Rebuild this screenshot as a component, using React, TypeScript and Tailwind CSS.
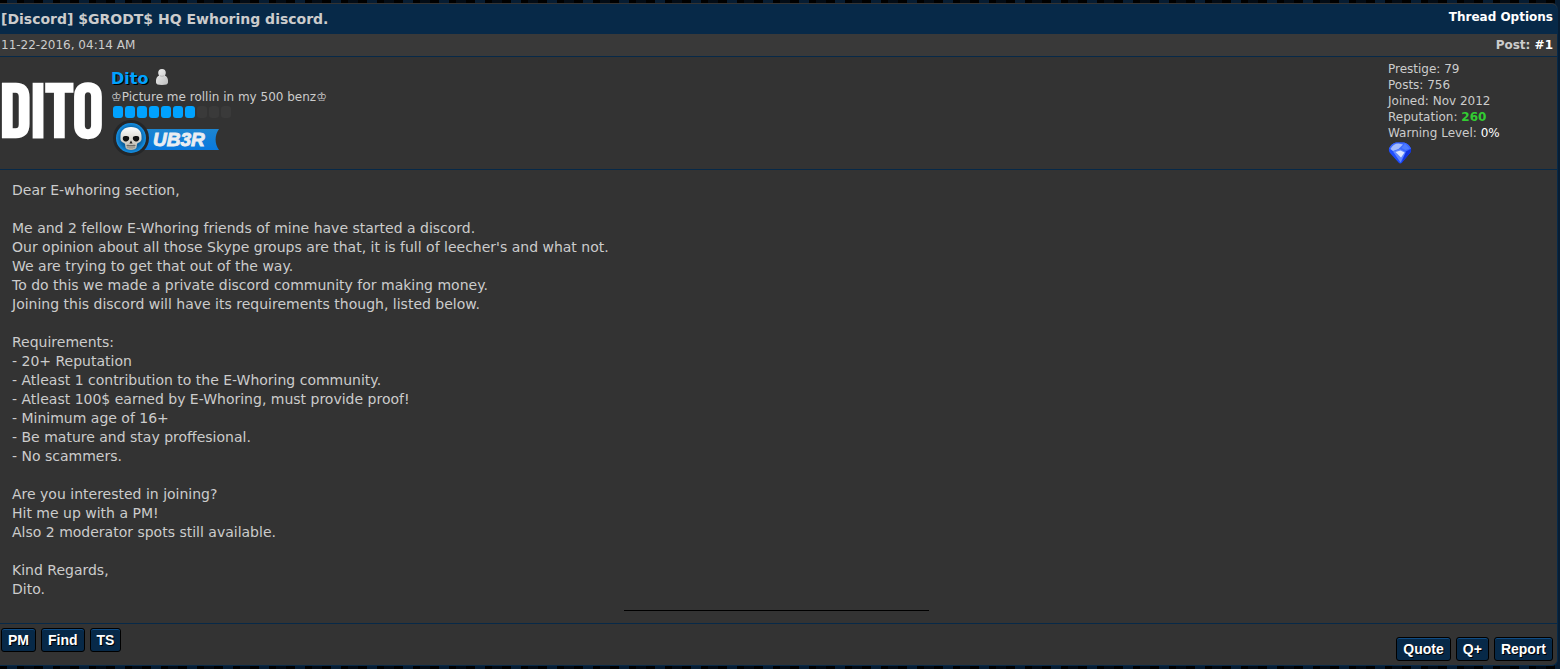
import type { ReactNode } from "react";

const intro = [
  "Dear E-whoring section,",
  "",
  "Me and 2 fellow E-Whoring friends of mine have started a discord.",
  "Our opinion about all those Skype groups are that, it is full of leecher's and what not.",
  "We are trying to get that out of the way.",
  "To do this we made a private discord community for making money.",
  "Joining this discord will have its requirements though, listed below.",
  "",
  "Requirements:",
  "- 20+ Reputation",
  "- Atleast 1 contribution to the E-Whoring community.",
  "- Atleast 100$ earned by E-Whoring, must provide proof!",
  "- Minimum age of 16+",
  "- Be mature and stay proffesional.",
  "- No scammers.",
  "",
  "Are you interested in joining?",
  "Hit me up with a PM!",
  "Also 2 moderator spots still available.",
  "",
  "Kind Regards,",
  "Dito.",
].join("\n");

const pips = [true, true, true, true, true, true, true, false, false, false];

function ActionButton({ children }: { children: ReactNode }) {
  return (
    <button
      type="button"
      className="h-6 rounded-[3px] border border-black bg-[#072948] px-1.5 font-['Liberation_Sans',sans-serif] text-sm leading-5 font-bold text-white shadow-[inset_0_1px_0_#0f4c85] [text-shadow:1px_1px_0_#000]"
    >
      {children}
    </button>
  );
}

function UserIcon() {
  return (
    <svg className="h-4 w-3" viewBox="0 0 12 16" aria-hidden="true">
      <defs>
        <linearGradient id="pawn" x1="0" y1="0" x2="1" y2="1">
          <stop offset="0" stopColor="#f2f2f2" />
          <stop offset="1" stopColor="#bdbdbd" />
        </linearGradient>
      </defs>
      <path
        d="M6 0a3.8 3.8 0 0 1 3.8 3.8c0 1.200-.4 2-1 2.700C10.800 7.400 12 9.400 12 11.500v2C12 15.200 10 16 6 16s-6-.8-6-2.500v-2c0-2.100 1.200-4.100 3.200-5C2.600 5.800 2.200 5 2.200 3.800A3.800 3.800 0 0 1 6 0z"
        fill="url(#pawn)"
      />
      <path d="M4 6.700c1.200.7 2.800.7 4 0" stroke="#aaa" strokeWidth=".8" fill="none" />
    </svg>
  );
}

function Gem() {
  return (
    <svg className="h-[22px] w-6" viewBox="0 0 24 22" aria-hidden="true">
      <path
        d="M8 .5h8c3 .5 5.500 2.500 7 6 .4 1.500 0 3-1 4.500L14 20.500c-1 1.200-2.500 1.200-3.500 0L2 11C1 9.500.6 8 1 6.500 2.500 3 5 1 8 .5z"
        fill="#1f4dff"
      />
      <path d="M8 .5h8c3 .5 5.500 2.500 7 6l-5 3-6-2-6 2-5-3C2.500 3 5 1 8 .5z" fill="#3b68ff" />
      <path d="M2.500 7C4 3.500 7 1.500 10.500 1.500L15 2.500 10.500 7 5 9z" fill="#a3bbff" />
      <path d="M5 9.500 12 7l6 3-5.500 10.500z" fill="#5f86ff" />
      <path d="m7.500 10 5-1.500 4 2-3.500 5z" fill="#dbe5ff" />
      <path d="m18 9.500 5-2.500c.2 1.500-.2 3-1 4l-8.500 10z" fill="#1232dc" />
      <path d="m17 1.500 4.500 5-4 1.500-4-2z" fill="#4f7dff" />
    </svg>
  );
}

function RankBadge() {
  return (
    <svg className="block h-9 w-[108px]" viewBox="0 0 108 36" role="img" aria-label="UB3R">
      <defs>
        <linearGradient id="ribbon" x1="0" y1="0" x2="0" y2="1">
          <stop offset="0" stopColor="#1d85d0" />
          <stop offset="1" stopColor="#0879e0" />
        </linearGradient>
        <radialGradient id="disc">
          <stop offset="0" stopColor="#043a62" />
          <stop offset=".7" stopColor="#0a64a5" />
          <stop offset="1" stopColor="#1591e6" />
        </radialGradient>
        <linearGradient id="bone" x1="0" y1="0" x2="0" y2="1">
          <stop offset="0" stopColor="#fff" />
          <stop offset="1" stopColor="#b9b4a6" />
        </linearGradient>
      </defs>
      <path d="M28 9h79c-4.500 6-4.500 15 0 21H28z" fill="url(#ribbon)" />
      <circle cx="19" cy="18" r="18" fill="#242628" />
      <circle cx="19" cy="18" r="15" fill="url(#disc)" />
      <path
        d="M19 7c7 0 10.500 4 10.500 9 0 2.500.5 4-1 5.500-1.200 1.200-3 1-3.500 2.500l-.5 3.500c-.5 1.500-2.500 2.500-5.500 2.500s-5-1-5.500-2.500L13 24c-.5-1.500-2.300-1.300-3.500-2.500-1.500-1.500-1-3-1-5.500C8.500 11 12 7 19 7z"
        fill="url(#bone)"
      />
      <path d="M11 17c1-1.200 4.500-1.200 6 0 .6 2-.2 4-2.500 4.500-2.500.3-4.300-1.500-3.500-4.500z" fill="#111" />
      <path d="M27 17c-1-1.200-4.500-1.200-6 0-.6 2 .2 4 2.500 4.500 2.500.3 4.300-1.500 3.500-4.500z" fill="#111" />
      <path d="m19 20.500-1.600 3h3.200z" fill="#222" />
      <path d="M14.500 25.500h9" stroke="#555" strokeWidth=".7" />
      <path d="M16 24.500v3.500M18 25v3.500M20 25v3.500M22 24.500v3.500" stroke="#555" strokeWidth=".6" />
      <text
        x="41"
        y="26"
        fontSize="19"
        className="fill-[#e9edf2] stroke-[#e9edf2] font-['Liberation_Sans',sans-serif] font-bold italic"
        strokeWidth=".9"
      >
        UB3R
      </text>
    </svg>
  );
}

export default function App() {
  return (
    <main className="bg-black bg-[repeating-linear-gradient(90deg,#000_0_7px,#071d33_7px_17px,#000_17px_24px,#030c16_24px_34px,#000_34px_36px)] py-[3px] pr-0.5 font-['DejaVu_Sans',sans-serif] text-xs leading-4 text-[#ccc]">
      <article className="rounded-r-md border-r border-b border-[#072948] bg-[#333]">
        <header className="flex h-[31px] items-center justify-between rounded-tr-md border-t border-[#333] bg-[#072948] pr-1 pl-px">
          <h1 className="text-sm font-bold">[Discord] $GRODT$ HQ Ewhoring discord.</h1>
          <a href="#options" className="pb-1 font-bold text-white">
            Thread Options
          </a>
        </header>

        <div className="flex h-[23px] items-center justify-between border-b border-[#072948] bg-[#393939] pr-1 pl-px">
          <time>11-22-2016, 04:14 AM</time>
          <p className="font-bold">
            Post:{" "}
            <a href="#post1" className="text-white">
              #1
            </a>
          </p>
        </div>

        <section className="flex h-[113px] justify-between border-b border-[#072948]">
          <div className="flex gap-2.5">
            <a
              href="#avatar"
              className="w-[101px] pt-1 font-['Bebas_Neue','Liberation_Sans',sans-serif] text-[76px] leading-[108px] font-bold text-white"
            >
              DITO
            </a>
            <div className="pt-3">
              <div className="flex h-5 gap-2">
                <a
                  href="#dito"
                  className="text-base leading-5 font-bold text-[#00a2ff] [text-shadow:1px_1px_0_#000]"
                >
                  Dito
                </a>
                <UserIcon />
              </div>
              <p>♔Picture me rollin in my 500 benz♔</p>
              <div className="mt-px flex gap-0.5 pl-0.5">
                {pips.map((on, i) => (
                  <span
                    key={i}
                    className={
                      on
                        ? "h-3 w-2.5 rounded-[3px] bg-[#00a2ff]"
                        : "h-3 w-2.5 rounded-[3px] bg-[#3a3a3a]"
                    }
                  />
                ))}
              </div>
              <div className="pt-0.5 pl-px">
                <RankBadge />
              </div>
            </div>
          </div>

          <div className="w-[169px] pt-1">
            <p>Prestige: 79</p>
            <p>Posts: 756</p>
            <p>Joined: Nov 2012</p>
            <p>
              Reputation: <b className="text-[#32cd32]">260</b>
            </p>
            <p>
              Warning Level: <a href="#warning" className="text-white">0%</a>
            </p>
            <div className="pt-px">
              <Gem />
            </div>
          </div>
        </section>

        <section className="pt-[11px] pr-4 pb-3 pl-3">
          <p className="text-sm leading-[19px] whitespace-pre-line">{intro}</p>
          <hr className="mx-auto mt-[11px] w-1/5 border-black" />
        </section>

        <footer className="flex items-start justify-between border-t border-[#072948] pt-1 pr-1 pb-1 pl-px">
          <div className="flex gap-[5px]">
            <ActionButton>PM</ActionButton>
            <ActionButton>Find</ActionButton>
            <ActionButton>TS</ActionButton>
          </div>
          <div className="flex gap-[5px] pt-[9px]">
            <ActionButton>Quote</ActionButton>
            <ActionButton>Q+</ActionButton>
            <ActionButton>Report</ActionButton>
          </div>
        </footer>
      </article>
    </main>
  );
}
